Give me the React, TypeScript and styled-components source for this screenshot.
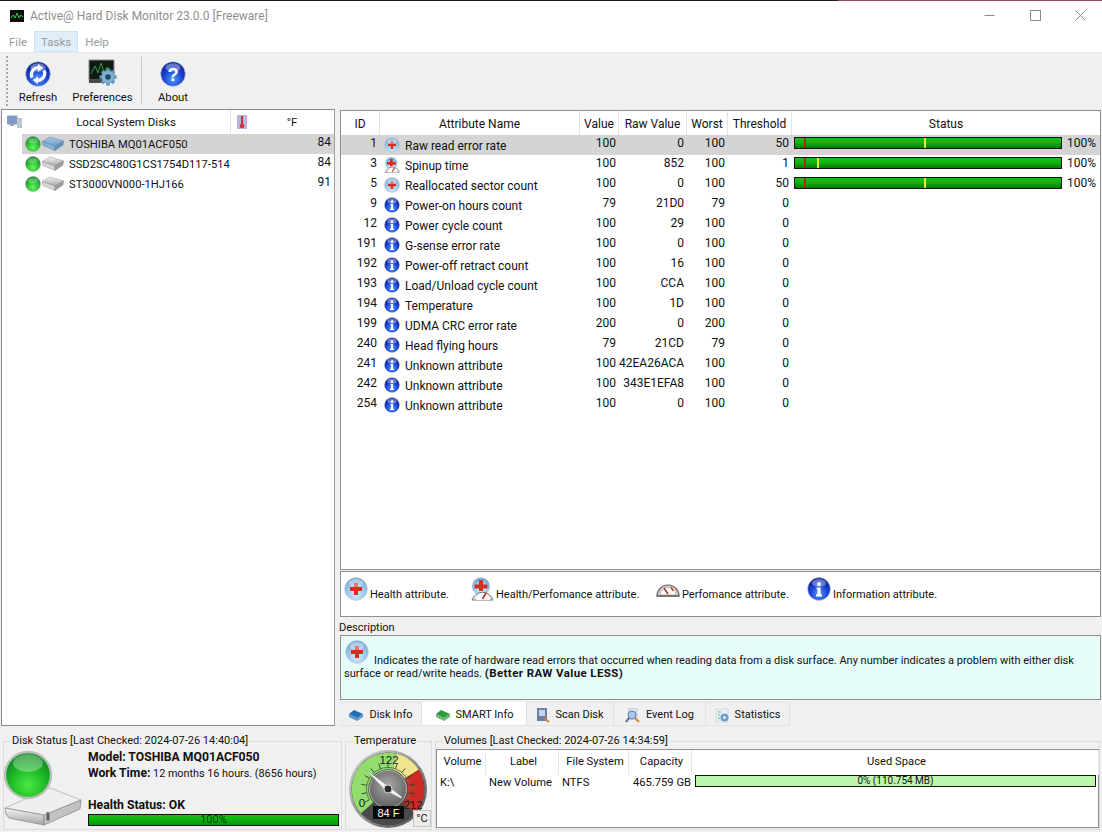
import React from 'react';
import styled, { createGlobalStyle } from 'styled-components';

const GlobalStyle = createGlobalStyle`
  html, body { margin: 0; padding: 0; background: #f0f0f0; }
  * { box-sizing: border-box; }
`

const Page = styled.div`
  width: 1102px;
  height: 832px;
  overflow: hidden;
  display: flex;
  flex-direction: column;
  background: #f0f0f0;
  color: #111;
  font-family: Roboto, "Open Sans", "Liberation Sans", sans-serif;
  font-size: 12px;
  line-height: 16px;
`
const TopEdge = styled.div`
  height: 1px;
  background: linear-gradient(to right, #1c1c1c 0 838px, #8c5058 838px);
`
const TitleBar = styled.div`
  height: 29px;
  background: #fff;
  display: flex;
  align-items: center;
  padding-left: 10px;
  color: #8f8f8f;
  font-size: 12px;
  svg { margin-right: 6px; }
`
const TitleText = styled.span`
  flex: 1;
`
const WinBtn = styled.div`
  width: 45.5px;
  height: 29px;
  display: flex;
  align-items: center;
  justify-content: center;
  svg { margin: 0; }
  &:last-child { margin-right: -1.500px; }
`
const MenuBar = styled.div`
  height: 23px;
  background: #fff;
  border-bottom: 1px solid #e8e8e8;
  display: flex;
  align-items: flex-start;
  padding: 1px 0 0 2px;
`
const MenuItem = styled.div<{ $active?: boolean }>`
  height: 21px;
  padding: 2px 6px 0;
  font-size: 11.500px;
  color: #9a9a9a;
  border: 1px solid ${p => (p.$active ? '#cde4f7' : 'transparent')};
  background: ${p => (p.$active ? '#e0eefa' : 'transparent')};
`
const Toolbar = styled.div`
  height: 56px;
  display: flex;
  align-items: stretch;
  padding: 3px 0 3px 6px;
`
const Grip = styled.div`
  width: 2px;
  border-left: 2px dotted #a8a8a8;
  margin-right: 4px;
`
const ToolButton = styled.div<{ $w: number }>`
  width: ${p => p.$w}px;
  display: flex;
  flex-direction: column;
  align-items: center;
  justify-content: flex-end;
  gap: 3px;
  font-size: 11.300px;
`
const ToolSep = styled.div`
  width: 1px;
  background: #c8c8c8;
  margin: 1px 0 1px;
`
const Main = styled.div`
  height: 617px;
  display: flex;
`
const TreePanel = styled.div`
  width: 334px;
  margin-left: 1px;
  background: #fff;
  border: 1px solid #8a8a8a;
  border-right-color: #a0a0a0;
`
const TreeHead = styled.div`
  height: 24px;
  display: grid;
  grid-template-columns: 228px 1fr;
  align-items: center;
  font-size: 11.500px;
`
const TreeHeadCell = styled.div`
  height: 24px;
  display: flex;
  align-items: center;
  gap: 5px;
  padding-left: 5px;
  & + & { border-left: 1px solid #e4e4e4; padding-left: 6px; }
`
const TreeTitle = styled.span<{ $w: number }>`
  width: ${p => p.$w}px;
  text-align: center;
`
const TreeRow = styled.div<{ $selected?: boolean }>`
  height: 20px;
  margin-left: 20px;
  padding: 0 3px;
  display: flex;
  align-items: center;
  background: ${p => (p.$selected ? '#d4d4d4' : 'transparent')};
`
const TreeName = styled.span`
  flex: 1;
  margin-left: 5px;
  padding-top: 2px;
  font-size: 11.200px;
`
const TreeTemp = styled.span`
  align-self: flex-start;
`
const Right = styled.div`
  width: 761px;
  margin-left: 5px;
  padding-top: 1px;
  display: flex;
  flex-direction: column;
`
const TablePanel = styled.div`
  height: 460px;
  background: #fff;
  border: 1px solid #8f8f8f;
`
const Grid = styled.div`
  display: grid;
  grid-template-columns: 39px 200px 39px 68px 41px 64px 1fr;
`
const HeadCell = styled.div`
  height: 24px;
  padding-top: 2px;
  display: flex;
  align-items: center;
  justify-content: center;
  border-right: 1px solid #e4e4e4;
  &:last-child { border-right: 0; }
`
const Row = styled(Grid)<{ $selected?: boolean }>`
  height: 20px;
  background: ${p => (p.$selected ? '#d4d4d4' : 'transparent')};
`
const Num = styled.div`
  text-align: right;
  padding-right: 3px;
`
const NameCell = styled.div`
  display: flex;
  align-items: center;
  gap: 5px;
  padding-left: 4px;
`
const NameText = styled.span`
  padding-top: 2px;
`
const StatusCell = styled.div`
  display: flex;
  align-items: flex-start;
  padding: 2px 0 0 2px;
  gap: 5px;
  span { margin-top: -2px; }
`
const Bar = styled.div`
  position: relative;
  width: 268px;
  height: 12px;
  border: 1px solid #111;
  background: linear-gradient(to bottom, #12c412 0%, #0fb40f 45%, #067a06 100%);
`
const Marker = styled.i<{ $c: string }>`
  position: absolute;
  top: 0;
  bottom: 0;
  width: 2px;
  background: ${p => p.$c};
`
const LegendPanel = styled.div`
  height: 46px;
  margin-top: 1px;
  background: #fff;
  border: 1px solid #8f8f8f;
  padding: 5px 0 0 3px;
  display: grid;
  grid-template-columns: 126px 186px 151px 1fr;
  align-items: start;
  font-size: 11px;
`
const LegendItem = styled.div`
  height: 26px;
  display: flex;
  align-items: flex-end;
  gap: 2px;
  svg { margin-bottom: 2px; }
`
const DescLabel = styled.div`
  height: 18px;
  padding-top: 3px;
  margin-left: -1px;
  font-size: 11px;
`
const DescBox = styled.div`
  height: 65px;
  background: #e6fcf9;
  border: 1px solid #8f8f8f;
  padding: 4px 3px;
  line-height: 13px;
  font-size: 11px;
  svg { vertical-align: baseline; margin-right: 5px; margin-left: 1px; }
  b { font-size: 11.500px; letter-spacing: 0.4px; }
`
const Tabs = styled.div`
  height: 24px;
  margin-top: 2px;
  display: flex;
`
const Tab = styled.div<{ $active?: boolean; $w: number }>`
  width: ${p => p.$w}px;
  padding-top: 2px;
  display: flex;
  align-items: center;
  justify-content: center;
  gap: 5px;
  font-size: 11px;
  background: ${p => (p.$active ? '#fff' : '#f0f0f0')};
  border: 1px solid #e2e2e2;
  border-left: 0;
  border-top-color: ${p => (p.$active ? '#fff' : '#e2e2e2')};
`
const Bottom = styled.div`
  height: 99px;
  margin-top: 7px;
  padding-left: 3px;
  display: flex;
  gap: 3px;
`
const Group = styled.fieldset<{ $w: number }>`
  position: relative;
  width: ${p => p.$w}px;
  height: 97px;
  margin: 0;
  padding: 0;
  border: 1px solid #dcdcdc;
  min-width: 0;
`
const GroupTitle = styled.legend`
  margin-left: 7px;
  padding: 0 1px;
  font-size: 11px;
  line-height: 16px;
`
const StatusBody = styled.div`
  display: flex;
  height: 80px;
`
const StatusInfo = styled.div`
  width: 251px;
  margin-left: 4px;
  display: flex;
  flex-direction: column;
`
const InfoLine = styled.div`
  height: 16px;
  white-space: nowrap;
  font-size: 10.800px;
  b { font-weight: 700; font-size: 12.200px; }
`
const HealthBar = styled.div`
  height: 12px;
  margin-top: 1px;
  border: 1px solid #111;
  background: linear-gradient(to bottom, #12c412 0%, #0db00d 50%, #07930a 100%);
  display: flex;
  align-items: center;
  justify-content: center;
  font-size: 11px;
  color: #0b3d0b;
`
const GaugeWrap = styled.div`
  width: 84px;
  margin-left: 1px;
  height: 80px;
`
const UnitButton = styled.div`
  position: absolute;
  right: 0;
  bottom: 2px;
  width: 18px;
  height: 17px;
  background: #ececec;
  border: 1px solid #c4c4c4;
  font-size: 11px;
  line-height: 15px;
  text-align: center;
`
const VolumesBox = styled.div`
  height: 79px;
  background: #fff;
  border: 1px solid #8f8f8f;
  font-size: 11.200px;
`
const VolGrid = styled.div`
  display: grid;
  grid-template-columns: 49px 73px 70px 63px 1fr;
`
const VolHead = styled.div`
  height: 25px;
  padding: 0 0 2px 3px;
  display: flex;
  align-items: center;
  justify-content: center;
  border-right: 1px solid #e8e8e8;
  &:last-child { border-right: 0; }
`
const VolCell = styled.div<{ $right?: boolean }>`
  height: 20px;
  padding: 0 ${p => (p.$right ? '1px' : '3px')};
  display: flex;
  align-items: flex-start;
  justify-content: ${p => (p.$right ? 'flex-end' : 'flex-start')};
  white-space: nowrap;
`
const UsedBar = styled.div`
  width: 401px;
  height: 12px;
  background: #bdf7ae;
  border: 1px solid #111;
  font-size: 10px;
  line-height: 10px;
  text-align: center;
`

function SharedDefs() {
  const radial = (id: string, inner: string, mid: string, outer: string) => (
    <radialGradient id={id} cx="50%" cy="72%" r="72%">
      <stop offset="0%" stopColor={inner} />
      <stop offset="55%" stopColor={mid} />
      <stop offset="100%" stopColor={outer} />
    </radialGradient>
  )
  return (
    <svg width="0" height="0" style={{ display: 'block' }}>
      <defs>
        {radial('ballBlue', '#4f9cff', '#1a3fd0', '#0b1f86')}
        {radial('ballPale', '#d6ebfa', '#9cc6e8', '#6e9fcc')}
        {radial('ballGreen', '#66f55f', '#28c22f', '#10792a')}
        {radial('ballBigGreen', '#4ae844', '#1cb726', '#0e7c25')}
        <linearGradient id="driveGray" x1="0" y1="0" x2="0" y2="1">
          <stop offset="0%" stopColor="#f4f4f4" />
          <stop offset="100%" stopColor="#a4a4a4" />
        </linearGradient>
        <linearGradient id="driveBlue" x1="0" y1="0" x2="0" y2="1">
          <stop offset="0%" stopColor="#a4c8e6" />
          <stop offset="100%" stopColor="#6a9cc6" />
        </linearGradient>
        <radialGradient id="gaugeHub" cx="50%" cy="40%" r="70%">
          <stop offset="0%" stopColor="#a8a8a8" />
          <stop offset="100%" stopColor="#565656" />
        </radialGradient>
        <linearGradient id="gaugeRim" x1="0" y1="0" x2="1" y2="1">
          <stop offset="0%" stopColor="#dcdcdc" />
          <stop offset="55%" stopColor="#8a8a8a" />
          <stop offset="100%" stopColor="#4a4a4a" />
        </linearGradient>
      </defs>
    </svg>
  )
}

function AppLogo() {
  return (
    <svg width="14" height="12" viewBox="0 0 14 12">
      <rect width="14" height="12" fill="#0d0d0d" />
      <path d="M1 8 L3 5 L5 8 L7 3 L9 8 L11 5 L13 7" fill="none" stroke="#2fd13a" strokeWidth="1" />
    </svg>
  )
}

function Ball({ size, fill, children }: { size: number; fill: string; children?: React.ReactNode }) {
  return (
    <svg width={size} height={size} viewBox="0 0 24 24">
      <circle cx="12" cy="12" r="11.400" fill={`url(#${fill})`} stroke="#c8d4e0" strokeWidth="0.6" />
      {children}
      <ellipse cx="12" cy="6" rx="7" ry="4" fill="#fff" opacity="0.35" />
    </svg>
  )
}

function HealthIcon({ size }: { size: number }) {
  return (
    <Ball size={size} fill="ballPale">
      <path d="M10 6h4v4h4v4h-4v4h-4v-4H6v-4h4z" fill="#d5301f" />
    </Ball>
  )
}

function InfoIcon({ size }: { size: number }) {
  return (
    <Ball size={size} fill="ballBlue">
      <circle cx="12" cy="7" r="2" fill="#fff" />
      <path d="M9.600 10.500h4v7h1.400v2H9v-2h1.400v-5H9.600z" fill="#fff" />
    </Ball>
  )
}

function GaugeIcon({ size }: { size: number }) {
  return (
    <svg width={size} height={size} viewBox="0 0 24 24">
      <path d="M1 19 A11 11 0 0 1 23 19 Z" fill="#d9d9d9" stroke="#6d6d6d" strokeWidth="1.200" />
      <path d="M4 18 A8 8 0 0 1 20 18 Z" fill="#fafafa" stroke="#8c8c8c" strokeWidth="0.6" />
      <path d="M12 17 L8 11" stroke="#a82a20" strokeWidth="1.400" />
      <path d="M15 10 L17 14" stroke="#d5301f" strokeWidth="1.400" />
      <rect x="0.500" y="18" width="23" height="2" fill="#777" />
    </svg>
  )
}

function HealthPerfIcon({ size }: { size: number }) {
  return (
    <svg width={size} height={size} viewBox="0 0 24 24">
      <circle cx="11" cy="9.500" r="9" fill="url(#ballPale)" />
      <path d="M9 3h4v4.500h4.500v4H13V14H9v-2.500H4.500v-4H9z" fill="#d5301f" />
      <path d="M2 23 A11 11 0 0 1 23 23 Z" fill="#e2e2e2" stroke="#777" strokeWidth="1" />
      <path d="M6 23 A7 7 0 0 1 20 23 Z" fill="#fbfbfb" />
      <path d="M12.500 22 L16 16" stroke="#c52a1e" strokeWidth="1.600" />
    </svg>
  )
}

function RefreshIcon() {
  return (
    <Ball size={26} fill="ballBlue">
      <path d="M6.500 15.500 A6.500 6.500 0 0 1 12.500 6.200" fill="none" stroke="#f2f6ff" strokeWidth="3" />
      <path d="M12 2.500 L17 6.500 L12 10 Z" fill="#f2f6ff" />
      <path d="M17.500 8.500 A6.500 6.500 0 0 1 11.500 17.800" fill="none" stroke="#f2f6ff" strokeWidth="3" />
      <path d="M12 14 L7 17.500 L12 21.500 Z" fill="#f2f6ff" />
    </Ball>
  )
}

function AboutIcon() {
  return (
    <Ball size={26} fill="ballBlue">
      <text x="12" y="18" textAnchor="middle" fontSize="17" fontWeight="700" fontFamily="Liberation Sans, sans-serif" fill="#fff">?</text>
    </Ball>
  )
}

function PrefsIcon() {
  const teeth = [0, 45, 90, 135]
  return (
    <svg width="30" height="28" viewBox="0 0 30 28">
      <rect x="1" y="1" width="25" height="20" fill="#0e1a12" stroke="#8a8a8a" />
      <rect x="1" y="21" width="25" height="3" fill="#4a4a4a" />
      <path d="M3 15 L7 7 L10 14 L13 4 L16 13 L19 8 L24 12" fill="none" stroke="#2d9a3e" strokeWidth="1" />
      <g transform="translate(20 18)">
        {teeth.map(t => (
          <rect key={t} x="-1.800" y="-8.500" width="3.600" height="17" fill="#5f8fb4" transform={`rotate(${t})`} />
        ))}
        <circle r="6.500" fill="#7fb0d2" />
        <circle r="2.800" fill="#1f4a6b" />
      </g>
    </svg>
  )
}

function DiskStatusIcon({ blue }: { blue: boolean }) {
  const edge = blue ? '#5a86ab' : '#8e8e8e'
  return (
    <svg width="39" height="16" viewBox="0 0 39 16">
      <circle cx="8" cy="8" r="7.500" fill="url(#ballGreen)" stroke="#8fa59a" strokeWidth="0.5" />
      <ellipse cx="8" cy="4.500" rx="5" ry="2.800" fill="#fff" opacity="0.25" />
      <path d="M17 5.500 L25 1 L38.500 5 L30 10 Z" fill={blue ? 'url(#driveBlue)' : 'url(#driveGray)'} stroke={edge} strokeWidth="0.5" />
      <path d="M17 5.500 L30 10 L30 14.500 L18 9.500 Z" fill={blue ? '#86b0d4' : '#d6d6d6'} stroke={edge} strokeWidth="0.5" />
      <path d="M30 10 L38.500 5 L38 9 L30 14.500 Z" fill={blue ? '#5f92bd' : '#9c9c9c'} stroke={edge} strokeWidth="0.5" />
    </svg>
  )
}

function ThermoIcon() {
  return (
    <svg width="10" height="14" viewBox="0 0 10 14">
      <rect width="10" height="14" fill="#b9b4dc" />
      <rect x="4" y="1" width="2" height="9" fill="#c6303c" />
      <circle cx="5" cy="11" r="2.300" fill="#c6303c" />
    </svg>
  )
}

function NetDiskIcon() {
  return (
    <svg width="15" height="14" viewBox="0 0 15 14">
      <rect x="0" y="1" width="10" height="8" fill="#7d9ccb" stroke="#91a0b4" />
      <rect x="3" y="9" width="4" height="2" fill="#9aa6b6" />
      <rect x="10" y="3" width="5" height="10" fill="#bcc5d0" />
    </svg>
  )
}

function BigDrive() {
  return (
    <svg width="80" height="78" viewBox="0 0 80 78">
      <path d="M1 59 L46 39 L77 51 L40 66 Z" fill="#efefef" stroke="#b4b4b4" strokeWidth="0.8" />
      <path d="M1 59 L40 66 L40 76 L5 69 Q1 66 1 59 Z" fill="url(#driveGray)" stroke="#8c8c8c" strokeWidth="0.8" />
      <path d="M40 66 L77 51 L76 60 L40 76 Z" fill="#c2c2c2" stroke="#8c8c8c" strokeWidth="0.8" />
      <rect x="42" y="63" width="4" height="9" fill="#5a6f5a" stroke="#d8d8d8" strokeWidth="0.6" />
      <circle cx="24" cy="26" r="23" fill="url(#ballBigGreen)" stroke="#b7c0b7" strokeWidth="2.400" />
      <ellipse cx="24" cy="14" rx="15" ry="9" fill="#fff" opacity="0.3" />
    </svg>
  )
}

function arcPath(cx: number, cy: number, r: number, a0: number, a1: number) {
  const pt = (a: number) => {
    const t = ((a - 90) * Math.PI) / 180
    return `${(cx + r * Math.cos(t)).toFixed(2)} ${(cy + r * Math.sin(t)).toFixed(2)}`
  }
  return `M${pt(a0)} A${r} ${r} 0 ${a1 - a0 > 180 ? 1 : 0} 1 ${pt(a1)}`
}

function Gauge() {
  const cx = 41
  const cy = 40
  const ticks = [-120, -100, -80, -60, -40, -20, 0, 20, 40, 60, 80, 100, 120]
  const labelFont = 'Liberation Sans, sans-serif'
  return (
    <svg width="84" height="80" viewBox="0 0 84 80">
      <circle cx={cx} cy={cy} r="39" fill="url(#gaugeRim)" />
      <circle cx={cx} cy={cy} r="36.500" fill="#4a4a4a" />
      <path d={arcPath(cx, cy, 28, -132, 14)} fill="none" stroke="#92dd6e" strokeWidth="16.500" />
      <path d={arcPath(cx, cy, 28, 14, 58)} fill="none" stroke="#efe58f" strokeWidth="16.500" />
      <path d={arcPath(cx, cy, 28, 58, 132)} fill="none" stroke="#cb2b23" strokeWidth="16.500" />
      <path d={arcPath(cx, cy, 21.500, -120, 120)} fill="none" stroke="#5b7a52" strokeWidth="1" />
      {ticks.map(t => (
        <line key={t} x1={cx} y1={cy - 21.500} x2={cx} y2={cy - 27} stroke="#2f3a2a" strokeWidth="0.8" transform={`rotate(${t} ${cx} ${cy})`} />
      ))}
      <circle cx={cx} cy={cy} r="18.500" fill="url(#gaugeHub)" stroke="#b4b4b4" strokeWidth="1" />
      <text x={cx + 1} y="15" textAnchor="middle" fontSize="11.500" fontFamily={labelFont} fill="#1c1c1c">122</text>
      <text x="15" y="58" textAnchor="middle" fontSize="11.500" fontFamily={labelFont} fill="#1c1c1c">0</text>
      <text x="66" y="60" textAnchor="middle" fontSize="11.500" fontFamily={labelFont} fill="#1c1c1c">212</text>
      <path d="M19 21 L41 37 L55 48 L54 49.500 L38 41 Z" fill="#f4f4f4" stroke="#7a7a7a" strokeWidth="0.3" />
      <circle cx={cx} cy={cy} r="4" fill="#2a2a2a" stroke="#d0d0d0" />
      <rect x="26" y="57" width="31" height="13" fill="#0a0a0a" />
      <text x="41.500" y="67.500" textAnchor="middle" fontSize="11" fontFamily={labelFont} fill="#fff">84 F</text>
    </svg>
  )
}

function BookIcon({ color }: { color: string }) {
  return (
    <svg width="16" height="13" viewBox="0 0 16 13">
      <path d="M1 5 L6 1 L15 5 L9 9 Z" fill={color} />
      <path d="M1 5 L9 9 L15 5 V8 L9 12 L1 8 Z" fill={color} opacity="0.7" />
    </svg>
  )
}

function ScanIcon() {
  return (
    <svg width="14" height="15" viewBox="0 0 14 15">
      <rect x="1" y="0" width="10" height="13" fill="#6d7fa8" />
      <rect x="3" y="2" width="6" height="6" fill="#c7d3ea" />
      <path d="M8 10 L13 14" stroke="#c9812e" strokeWidth="2" />
    </svg>
  )
}

function LogIcon() {
  return (
    <svg width="16" height="15" viewBox="0 0 16 15">
      <rect x="4" y="0" width="8" height="11" fill="#dfe6f0" stroke="#9fb0c8" strokeWidth="0.6" />
      <circle cx="7" cy="7" r="4" fill="#a9c6e6" stroke="#5a7da8" />
      <path d="M4 10 L1 14" stroke="#4a6b96" strokeWidth="2" />
      <path d="M10 10 L14 14" stroke="#d08a30" strokeWidth="2" />
    </svg>
  )
}

function StatsIcon() {
  return (
    <svg width="15" height="15" viewBox="0 0 15 15">
      <rect x="1" y="1" width="12" height="13" fill="#e9eff7" stroke="#c3d2e4" strokeWidth="0.6" />
      <path d="M3 4h3M3 7h2M3 10h2" stroke="#6fb36f" strokeWidth="1" />
      <circle cx="9.500" cy="9.500" r="4" fill="#6e9fcb" />
      <circle cx="9.500" cy="9.500" r="1.500" fill="#e9eff7" />
    </svg>
  )
}

function WinIcon({ kind }: { kind: 'min' | 'max' | 'close' }) {
  return (
    <svg width="11" height="11" viewBox="0 0 11 11" stroke="#8c8c8c" fill="none" strokeWidth="1">
      {kind === 'min' && <path d="M0.500 5.500h10" />}
      {kind === 'max' && <rect x="0.500" y="0.500" width="10" height="10" />}
      {kind === 'close' && <path d="M0.500 0.500l10 10M10.500 0.500l-10 10" />}
    </svg>
  )
}

const disks = [
  { name: 'TOSHIBA MQ01ACF050', temp: 84, selected: true },
  { name: 'SSD2SC480G1CS1754D117-514', temp: 84 },
  { name: 'ST3000VN000-1HJ166', temp: 91 },
]

type Kind = 'health' | 'both' | 'info'

const attrs: { id: number; name: string; value: number; raw: string; worst: number; thr: number; kind: Kind; yellow?: number }[] = [
  { id: 1, name: 'Raw read error rate', value: 100, raw: '0', worst: 100, thr: 50, kind: 'health', yellow: 48.500 },
  { id: 3, name: 'Spinup time', value: 100, raw: '852', worst: 100, thr: 1, kind: 'both', yellow: 8.300 },
  { id: 5, name: 'Reallocated sector count', value: 100, raw: '0', worst: 100, thr: 50, kind: 'health', yellow: 48.500 },
  { id: 9, name: 'Power-on hours count', value: 79, raw: '21D0', worst: 79, thr: 0, kind: 'info' },
  { id: 12, name: 'Power cycle count', value: 100, raw: '29', worst: 100, thr: 0, kind: 'info' },
  { id: 191, name: 'G-sense error rate', value: 100, raw: '0', worst: 100, thr: 0, kind: 'info' },
  { id: 192, name: 'Power-off retract count', value: 100, raw: '16', worst: 100, thr: 0, kind: 'info' },
  { id: 193, name: 'Load/Unload cycle count', value: 100, raw: 'CCA', worst: 100, thr: 0, kind: 'info' },
  { id: 194, name: 'Temperature', value: 100, raw: '1D', worst: 100, thr: 0, kind: 'info' },
  { id: 199, name: 'UDMA CRC error rate', value: 200, raw: '0', worst: 200, thr: 0, kind: 'info' },
  { id: 240, name: 'Head flying hours', value: 79, raw: '21CD', worst: 79, thr: 0, kind: 'info' },
  { id: 241, name: 'Unknown attribute', value: 100, raw: '42EA26ACA', worst: 100, thr: 0, kind: 'info' },
  { id: 242, name: 'Unknown attribute', value: 100, raw: '343E1EFA8', worst: 100, thr: 0, kind: 'info' },
  { id: 254, name: 'Unknown attribute', value: 100, raw: '0', worst: 100, thr: 0, kind: 'info' },
]

function AttrIcon({ kind }: { kind: Kind }) {
  if (kind === 'health') return <HealthIcon size={16} />
  if (kind === 'both') return <HealthPerfIcon size={16} />
  return <InfoIcon size={16} />
}

export default function App() {
  return (
    <Page>
      <GlobalStyle />
      <SharedDefs />
      <TopEdge />
      <TitleBar>
        <AppLogo />
        <TitleText>Active@ Hard Disk Monitor 23.0.0 [Freeware]</TitleText>
        <WinBtn><WinIcon kind="min" /></WinBtn>
        <WinBtn><WinIcon kind="max" /></WinBtn>
        <WinBtn><WinIcon kind="close" /></WinBtn>
      </TitleBar>
      <MenuBar>
        <MenuItem>File</MenuItem>
        <MenuItem $active>Tasks</MenuItem>
        <MenuItem>Help</MenuItem>
      </MenuBar>
      <Toolbar>
        <Grip />
        <ToolButton $w={52}><RefreshIcon />Refresh</ToolButton>
        <ToolButton $w={77}><PrefsIcon />Preferences</ToolButton>
        <ToolSep />
        <ToolButton $w={62}><AboutIcon />About</ToolButton>
      </Toolbar>
      <Main>
        <TreePanel>
          <TreeHead>
            <TreeHeadCell><NetDiskIcon /><TreeTitle $w={198}>Local System Disks</TreeTitle></TreeHeadCell>
            <TreeHeadCell><ThermoIcon /><TreeTitle $w={80}>°F</TreeTitle></TreeHeadCell>
          </TreeHead>
          {disks.map(d => (
            <TreeRow key={d.name} $selected={d.selected}>
              <DiskStatusIcon blue={!!d.selected} />
              <TreeName>{d.name}</TreeName>
              <TreeTemp>{d.temp}</TreeTemp>
            </TreeRow>
          ))}
        </TreePanel>
        <Right>
          <TablePanel>
            <Grid>
              <HeadCell>ID</HeadCell>
              <HeadCell>Attribute Name</HeadCell>
              <HeadCell>Value</HeadCell>
              <HeadCell>Raw Value</HeadCell>
              <HeadCell>Worst</HeadCell>
              <HeadCell>Threshold</HeadCell>
              <HeadCell>Status</HeadCell>
            </Grid>
            {attrs.map((a, i) => (
              <Row key={a.id} $selected={i === 0}>
                <Num>{a.id}</Num>
                <NameCell><AttrIcon kind={a.kind} /><NameText>{a.name}</NameText></NameCell>
                <Num>{a.value}</Num>
                <Num>{a.raw}</Num>
                <Num>{a.worst}</Num>
                <Num>{a.thr}</Num>
                <StatusCell>
                  {a.yellow !== undefined && (
                    <>
                      <Bar>
                        <Marker $c="#b3261a" style={{ left: '3.400%' }} />
                        <Marker $c="#e8ea2a" style={{ left: `${a.yellow}%` }} />
                      </Bar>
                      <span>100%</span>
                    </>
                  )}
                </StatusCell>
              </Row>
            ))}
          </TablePanel>
          <LegendPanel>
            <LegendItem><HealthIcon size={24} />Health attribute.</LegendItem>
            <LegendItem><HealthPerfIcon size={24} />Health/Perfomance attribute.</LegendItem>
            <LegendItem><GaugeIcon size={24} />Perfomance attribute.</LegendItem>
            <LegendItem><InfoIcon size={24} />Information attribute.</LegendItem>
          </LegendPanel>
          <DescLabel>Description</DescLabel>
          <DescBox>
            <HealthIcon size={24} />
            Indicates the rate of hardware read errors that occurred when reading data from a disk surface. Any number indicates a problem with either disk surface or read/write heads. <b>(Better RAW Value LESS)</b>
          </DescBox>
          <Tabs>
            <Tab $w={82}><BookIcon color="#1f6fb8" />Disk Info</Tab>
            <Tab $w={105} $active><BookIcon color="#2f9a3c" />SMART Info</Tab>
            <Tab $w={87}><ScanIcon />Scan Disk</Tab>
            <Tab $w={92}><LogIcon />Event Log</Tab>
            <Tab $w={84}><StatsIcon />Statistics</Tab>
          </Tabs>
        </Right>
      </Main>
      <Bottom>
        <Group $w={339}>
          <GroupTitle>Disk Status [Last Checked: 2024-07-26 14:40:04]</GroupTitle>
          <StatusBody>
            <BigDrive />
            <StatusInfo>
              <InfoLine><b>Model: TOSHIBA MQ01ACF050</b></InfoLine>
              <InfoLine><b>Work Time:</b> 12 months 16 hours. (8656 hours)</InfoLine>
              <InfoLine />
              <InfoLine><b>Health Status: OK</b></InfoLine>
              <HealthBar>100%</HealthBar>
            </StatusInfo>
          </StatusBody>
        </Group>
        <Group $w={87}>
          <GroupTitle>Temperature</GroupTitle>
          <GaugeWrap><Gauge /></GaugeWrap>
          <UnitButton>°C</UnitButton>
        </Group>
        <Group $w={665}>
          <GroupTitle>Volumes [Last Checked: 2024-07-26 14:34:59]</GroupTitle>
          <VolumesBox>
            <VolGrid>
              <VolHead>Volume</VolHead>
              <VolHead>Label</VolHead>
              <VolHead>File System</VolHead>
              <VolHead>Capacity</VolHead>
              <VolHead>Used Space</VolHead>
              <VolCell>K:\</VolCell>
              <VolCell>New Volume</VolCell>
              <VolCell>NTFS</VolCell>
              <VolCell $right>465.759 GB</VolCell>
              <VolCell><UsedBar>0% (110.754 MB)</UsedBar></VolCell>
            </VolGrid>
          </VolumesBox>
        </Group>
      </Bottom>
    </Page>
  )
}
